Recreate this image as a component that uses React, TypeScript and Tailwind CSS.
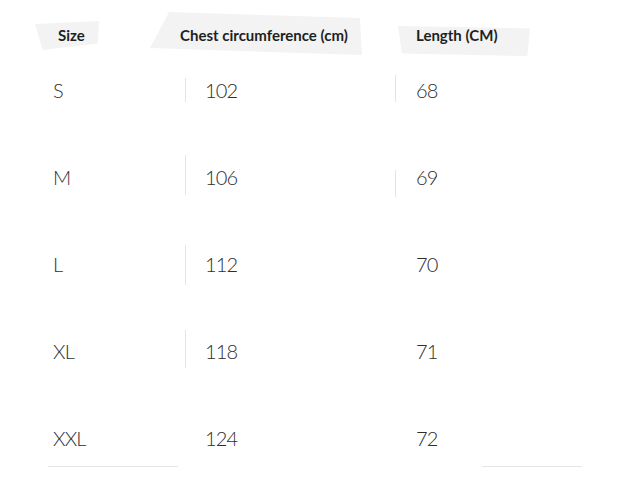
const rows = [
  { size: 'S', chest: '102', length: '68', d1: 'mt-[31px] h-[24px]', d2: 'mt-[28px] h-[27px]' },
  { size: 'M', chest: '106', length: '69', d1: 'mt-[21px] h-[40px]', d2: 'mt-[36px] h-[27px]' },
  { size: 'L', chest: '112', length: '70', d1: 'mt-[24px] h-[40px]', d2: '' },
  { size: 'XL', chest: '118', length: '71', d1: 'mt-[22px] h-[38px]', d2: '' },
  { size: 'XXL', chest: '124', length: '72', d1: '', d2: '' },
];

const App = () => (
  <div className="w-[640px] h-[493px] bg-white overflow-hidden font-['Lato','Liberation_Sans',sans-serif]">
    {/* header with torn-paper style blobs */}
    <div className="relative flex h-[47px] text-[15px] font-bold text-[#1f1f1f]">
      <div className="absolute left-[35px] top-[21px] w-[64px] h-[29px] bg-[#f3f3f3] [clip-path:polygon(0_10%,100%_0,98%_78%,12%_100%)]" />
      <div className="absolute left-[150px] top-[12px] w-[212px] h-[43px] bg-[#f3f3f3] [clip-path:polygon(9%_0,99%_14%,100%_100%,0_84%)]" />
      <div className="absolute left-[398px] top-[26px] w-[132px] h-[30px] bg-[#f3f3f3] [clip-path:polygon(0_0,100%_8%,98%_100%,3%_92%)]" />
      <div className="relative w-[180px] pl-[58px] pt-[25px] leading-5">Size</div>
      <div className="relative w-[236px] pt-[25px] leading-5">Chest circumference (cm)</div>
      <div className="relative pt-[25px] leading-5">Length (CM)</div>
    </div>

    {rows.map((r, i) => (
      <div
        key={r.size}
        className={`flex items-start text-[20px] font-light leading-7 text-[#2e2e2e] ${i === rows.length - 1 ? 'h-[71px]' : 'h-[87px]'}`}
      >
        <div className="w-[185px] pl-[53px] pt-[29px] tracking-[-0.8px]">{r.size}</div>
        <div className={`w-px ${r.d1 ? `bg-[#e4e4e4] ${r.d1}` : ''}`} />
        <div className="w-[209px] pl-[19px] pt-[29px] tracking-[-0.8px]">{r.chest}</div>
        <div className={`w-px ${r.d2 ? `bg-[#e4e4e4] ${r.d2}` : ''}`} />
        <div className="pl-5 pt-[29px] tracking-[-0.8px]">{r.length}</div>
      </div>
    ))}

    <div className="flex">
      <div className="ml-[48px] w-[130px] h-px bg-[#e6e6e6]" />
      <div className="ml-[304px] w-[100px] h-px bg-[#e6e6e6]" />
    </div>
  </div>
);

export default App;
